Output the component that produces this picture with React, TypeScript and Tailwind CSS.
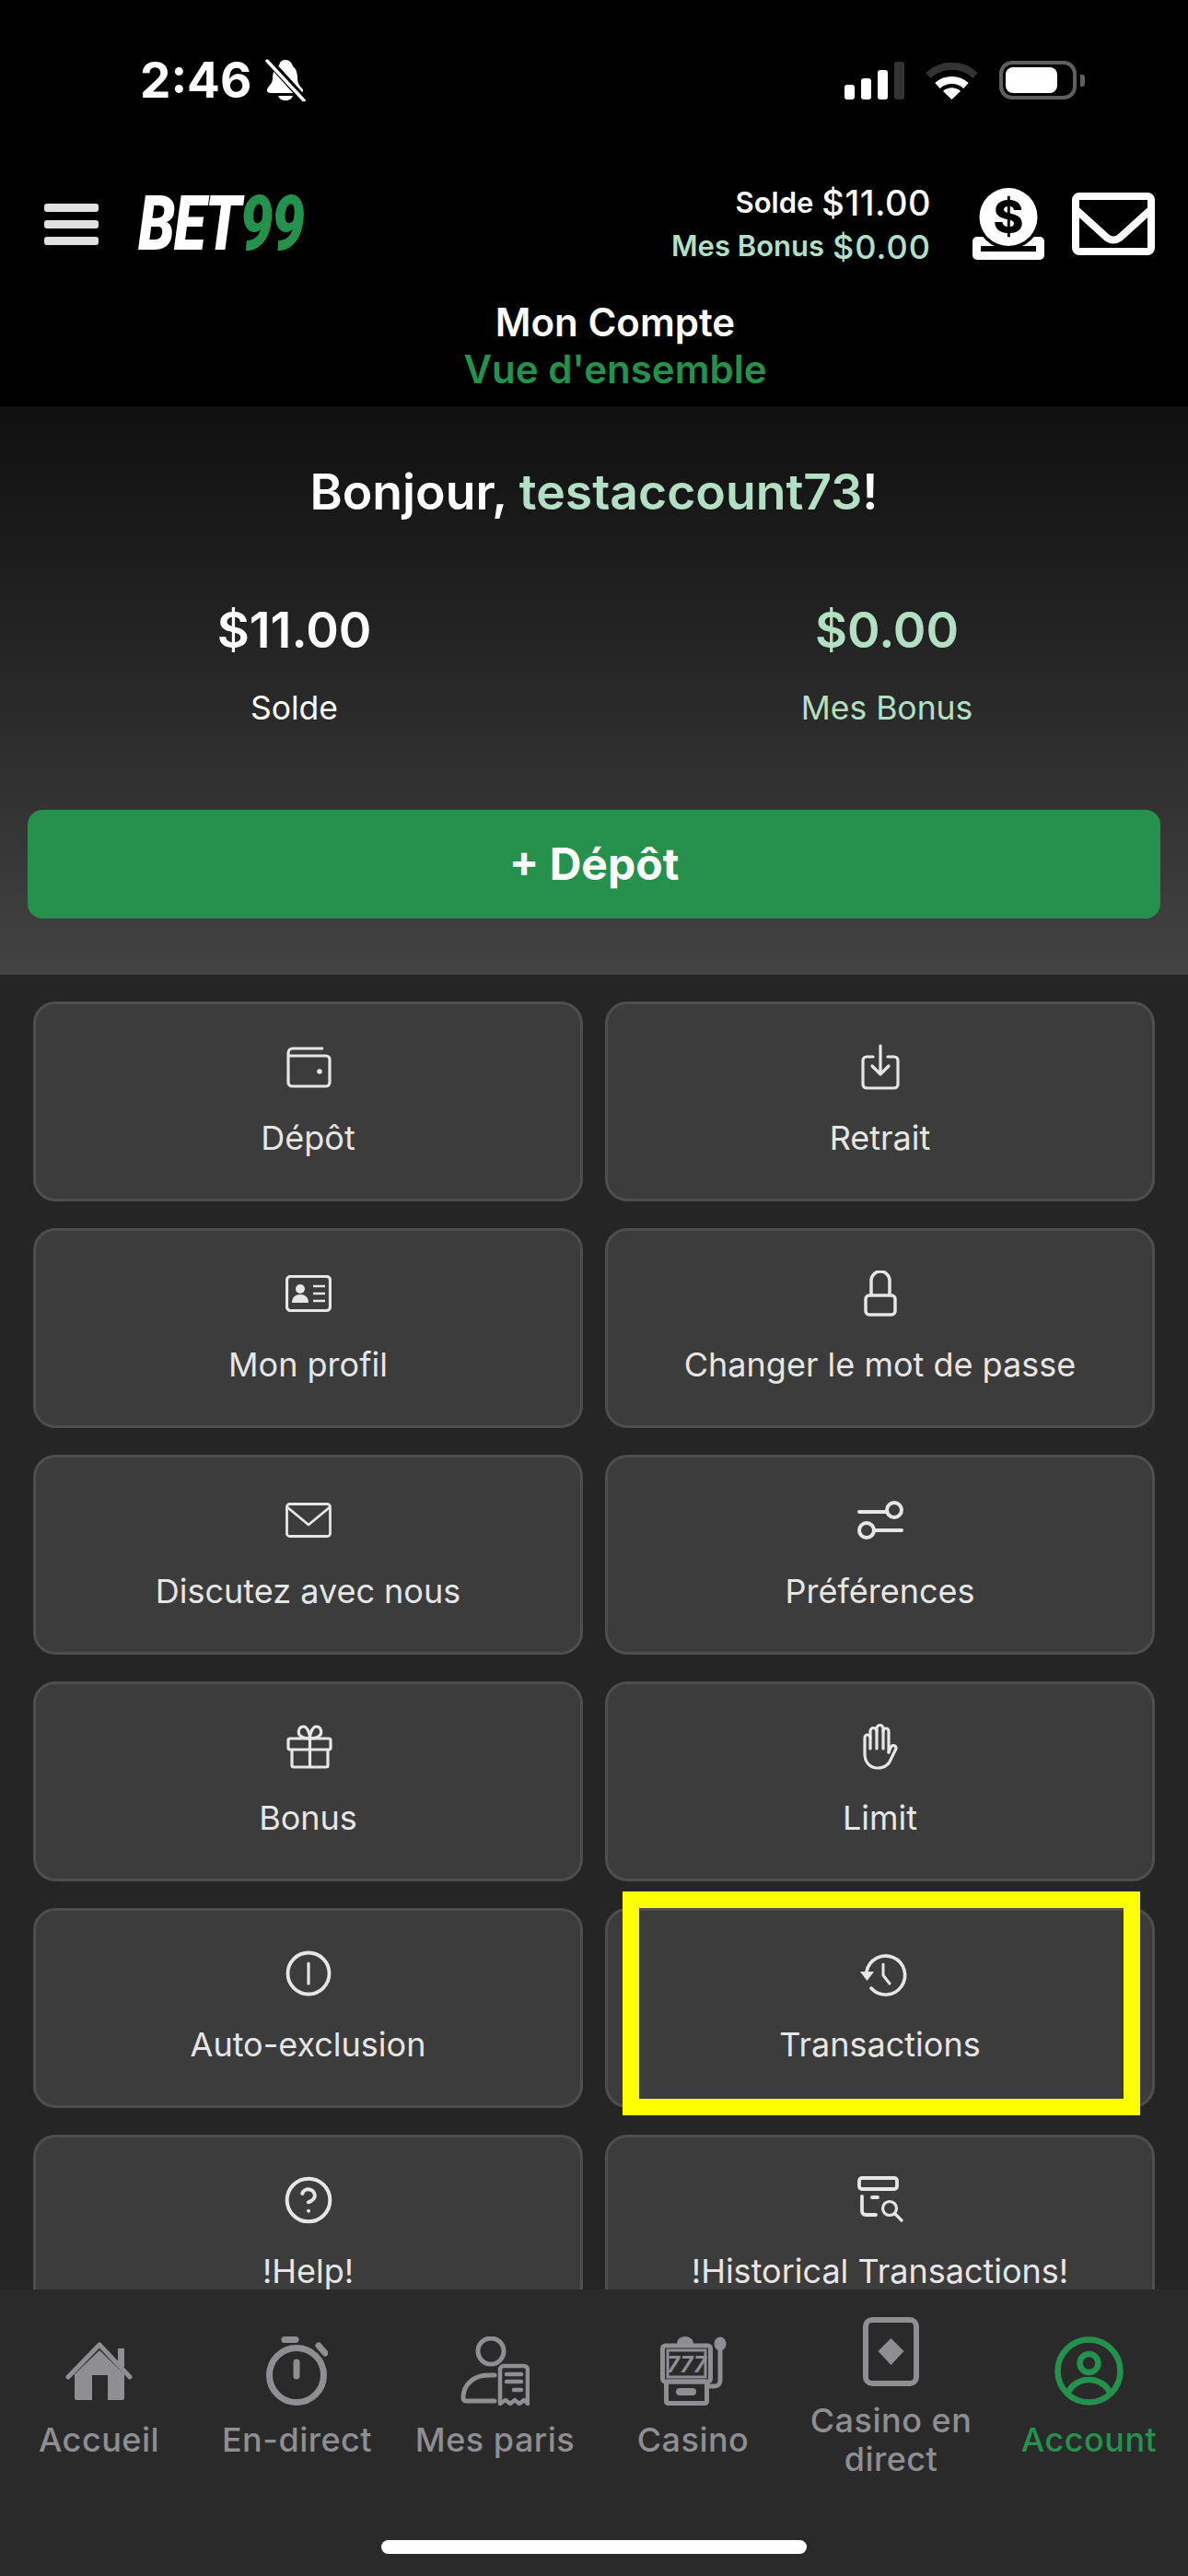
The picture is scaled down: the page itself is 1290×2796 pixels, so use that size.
import React from 'react';
import { CircleHelp } from 'lucide-react';

const font = { fontFamily: 'Inter, "Liberation Sans", sans-serif' };

const WalletIcon = () => (
  <svg width="50" height="46" viewBox="0 0 50 46" fill="none" stroke="currentColor" strokeWidth="3.2">
    <path d="M41 3H8a5 5 0 0 0-5 5v32a4 4 0 0 0 4 4h37a4 4 0 0 0 4-4V15a4 4 0 0 0-4-4H4" />
    <circle cx="37" cy="28" r="2.8" fill="currentColor" stroke="none" />
  </svg>
);

const WithdrawIcon = () => (
  <svg width="42" height="50" viewBox="0 0 42 50" fill="none" stroke="currentColor" strokeWidth="3.2" strokeLinecap="round" strokeLinejoin="round">
    <path d="M13 14H6a4 4 0 0 0-4 4v26a4 4 0 0 0 4 4h30a4 4 0 0 0 4-4V18a4 4 0 0 0-4-4h-7" />
    <path d="M21 2v31M12 24l9 9 9-9" />
  </svg>
);

const ProfileIcon = () => (
  <svg width="50" height="40" viewBox="0 0 50 40" fill="none" stroke="currentColor" strokeWidth="3.2">
    <rect x="1.5" y="1.5" width="47" height="37" rx="4" />
    <circle cx="16" cy="15" r="5" fill="currentColor" stroke="none" />
    <path d="M7 30c0-6 4-9 9-9s9 3 9 9z" fill="currentColor" stroke="none" />
    <path d="M30 12h13M30 20h13M30 28h13" strokeWidth="2.5" />
  </svg>
);

const LockIcon = () => (
  <svg width="36" height="50" viewBox="0 0 36 50" fill="none" stroke="currentColor" strokeWidth="3.5" strokeLinejoin="round">
    <path d="M8 27V11a10 10 0 0 1 20 0v16" />
    <rect x="2" y="27" width="32" height="21" rx="4" />
  </svg>
);

const MailLineIcon = () => (
  <svg width="50" height="38" viewBox="0 0 50 38" fill="none" stroke="currentColor" strokeWidth="2.8" strokeLinejoin="round">
    <rect x="1.5" y="1.5" width="47" height="35" rx="3" />
    <path d="M2 5l23 19L48 5" />
  </svg>
);

const SlidersIcon = () => (
  <svg width="50" height="44" viewBox="0 0 50 44" fill="none" stroke="currentColor" strokeWidth="4" strokeLinecap="round">
    <path d="M2 13h30M18 33h30" />
    <circle cx="40" cy="11" r="8" />
    <circle cx="10" cy="33" r="8" />
  </svg>
);

const GiftIcon = () => (
  <svg width="70" height="70" viewBox="0 1 70 70" fill="none" stroke="currentColor" strokeWidth="3.2" strokeLinejoin="round">
    <rect x="13" y="27" width="46" height="12" rx="2" />
    <path d="M17 39v17a2 2 0 0 0 2 2h35a2 2 0 0 0 2-2V39M36.5 27v31" />
    <path d="M36.5 27c-4 0-10-1-12-5-1-4 1-8 5-8s7 7 7 13c0-6 3-13 7-13s6 4 5 8c-2 4-8 5-12 5z" />
  </svg>
);

const HandIcon = () => (
  <svg width="70" height="70" viewBox="0 1 70 70" fill="none" stroke="currentColor" strokeWidth="3.2" strokeLinecap="round" strokeLinejoin="round">
    <path d="M24 38V26a3 3 0 0 0-6 0v18c0 9 6 15 14 15s13-5 15-11l5-10a3 3 0 0 0-5.5-2L44 42" />
    <path d="M24 26v-7a3.5 3.5 0 0 1 7 0v19" />
    <path d="M31 19v-3a3.5 3.5 0 0 1 7 0v22" />
    <path d="M38 19a3 3 0 0 1 6 0v23" />
  </svg>
);

const InfoLineIcon = () => (
  <svg width="50" height="50" viewBox="0 0 50 50" fill="none" stroke="currentColor" strokeWidth="3.8" strokeLinecap="round">
    <circle cx="25" cy="25" r="22.5" />
    <path d="M25 14v22" strokeWidth="3.2" />
  </svg>
);

const HistoryIcon = () => (
  <svg width="70" height="70" viewBox="0 -3 70 70" fill="none" stroke="currentColor" strokeWidth="3.6" strokeLinecap="round" strokeLinejoin="round">
    <path d="M20 30A21 21 0 1 1 25 48" />
    <path d="M13 30h15l-7.5 10z" fill="currentColor" stroke="none" />
    <path d="M38 22v12l7 9" strokeWidth="3" />
  </svg>
);

const HistoricalIcon = () => (
  <svg width="70" height="70" viewBox="0 -2 70 70" fill="none" stroke="currentColor" strokeWidth="3.8" strokeLinecap="round" strokeLinejoin="round">
    <rect x="12" y="9" width="41" height="12" rx="3" />
    <path d="M15 29v16a4 4 0 0 0 4 4h11M26 30h6" />
    <circle cx="45" cy="42" r="7.5" strokeWidth="3.2" />
    <path d="M51 48l7 7" strokeWidth="3.2" />
  </svg>
);

const DepositIcon = () => (
  <svg width="78" height="78" viewBox="0 0 78 78">
    <rect x="0" y="53" width="78" height="25" rx="5" fill="#fff" />
    <rect x="9" y="63" width="60" height="6" fill="#000" />
    <circle cx="39" cy="31.5" r="35" fill="#000" />
    <circle cx="39" cy="31.5" r="31.5" fill="#fff" />
    <text x="39" y="49" textAnchor="middle" fontSize="50" fontWeight="800" fill="#000" fontFamily="Inter, sans-serif">$</text>
  </svg>
);

const HeaderMailIcon = () => (
  <svg width="90" height="68" viewBox="0 0 90 68" fill="none" stroke="#fff" strokeWidth="8" strokeLinejoin="round" strokeLinecap="round">
    <rect x="4" y="4" width="82" height="60" rx="4" />
    <path d="M6 20l32 29q7 5 14 0l32-29" />
  </svg>
);

const BellOffIcon = () => (
  <svg width="44" height="46" viewBox="0 0 44 46">
    <path d="M22 1c4 0 7 3 8 7 4 3 5 8 5 13 0 5 2 8 5 11 2 2 1 5-2 5H6c-4 0-5-3-3-6 2-3 5-5 5-10 0-7 3-12 7-14 1-4 3-6 7-6z" fill="#fff" />
    <path d="M14 40h16c-1 3-4 5-8 5s-7-2-8-5z" fill="#fff" />
    <path d="M1 -1l42 46" stroke="#000" strokeWidth="8" />
    <path d="M2 2l40 43" stroke="#fff" strokeWidth="3.5" strokeLinecap="round" />
  </svg>
);

const SignalIcon = () => (
  <svg width="65" height="41" viewBox="0 0 65 41">
    <rect x="0" y="25" width="11" height="16" rx="3" fill="#fff" />
    <rect x="18" y="18" width="11" height="23" rx="3" fill="#fff" />
    <rect x="36" y="9" width="11" height="32" rx="3" fill="#fff" />
    <rect x="54" y="0" width="11" height="41" rx="3" fill="#333" />
  </svg>
);

const WifiIcon = () => (
  <svg width="57" height="42" viewBox="0 0 57 42" fill="none">
    <path d="M3 16a37 37 0 0 1 51 0" stroke="#333" strokeWidth="8" />
    <path d="M13 27a23 23 0 0 1 31 0" stroke="#fff" strokeWidth="8" />
    <path d="M28.5 42L19 33a14 14 0 0 1 19 0z" fill="#fff" />
  </svg>
);

const BatteryIcon = () => (
  <div className="flex items-center">
    <div className="w-[84px] h-[42px] rounded-[14px] border-[4px] border-[#5f5f5f] p-[3px]">
      <div className="w-[56px] h-full rounded-[8px] bg-white" />
    </div>
    <div className="ml-[4px] w-[5px] h-[13px] rounded-r-[3px] bg-[#5f5f5f]" />
  </div>
);

const HomeIcon = () => (
  <svg width="73" height="64" viewBox="0 0 73 64">
    <path d="M10 36L37 10l27 26v26a2 2 0 0 1-2 2H12a2 2 0 0 1-2-2z" fill="#8e8e93" />
    <rect x="57" y="8" width="7" height="20" fill="#8e8e93" />
    <path d="M3 39L37 4l33 35" fill="none" stroke="#8e8e93" strokeWidth="5" strokeLinecap="round" strokeLinejoin="round" />
    <rect x="29" y="37" width="17" height="27" fill="#2a2a2a" />
  </svg>
);

const TimerIcon = () => (
  <svg width="67" height="75" viewBox="0 0 67 75" fill="none" stroke="#8e8e93" strokeWidth="7" strokeLinecap="round">
    <path d="M20 3.5h12" strokeWidth="7" />
    <circle cx="33" cy="42" r="29.5" />
    <path d="M33 28v15M57 10l7 8" />
  </svg>
);

const BetsIcon = () => (
  <svg width="75" height="75" viewBox="0 0 75 75" fill="none" stroke="#8e8e93" strokeWidth="5" strokeLinecap="round" strokeLinejoin="round">
    <circle cx="33" cy="16" r="14" />
    <path d="M37 42h-7C14 42 3 53 3 66v1a3 3 0 0 0 3 3h31" />
    <path d="M43 73V36a4 4 0 0 1 4-4h22a4 4 0 0 1 4 4v37l-4-4-5 4-5-4-5 4-5-4z" strokeWidth="4.5" />
    <path d="M50 41h16M50 49h16M58 58h8" strokeWidth="4.5" />
  </svg>
);

const SlotIcon = () => (
  <svg width="72" height="75" viewBox="0 0 72 75" fill="none" stroke="#8e8e93" strokeWidth="5">
    <path d="M18 8a9 8 0 0 1 18 0z" fill="#8e8e93" stroke="none" />
    <rect x="2.5" y="10" width="52" height="39" rx="3" />
    <rect x="8" y="15" width="41" height="29" strokeWidth="3" />
    <text x="28.5" y="39" textAnchor="middle" fontSize="24" fontWeight="700" fontStyle="italic" fill="#8e8e93" stroke="none" fontFamily="Inter, sans-serif">777</text>
    <rect x="6.5" y="49" width="44" height="23.5" rx="2" />
    <rect x="17" y="56" width="22" height="8" rx="4" fill="#8e8e93" stroke="none" />
    <ellipse cx="65" cy="8" rx="6.5" ry="7.5" fill="#8e8e93" stroke="none" />
    <path d="M65 12v36a6 6 0 0 1-6 6h-8" />
  </svg>
);

const CardIcon = () => (
  <svg width="61" height="75" viewBox="0 0 61 75" fill="none">
    <rect x="3" y="3" width="55" height="69" rx="7" stroke="#8e8e93" strokeWidth="6" />
    <path d="M30.5 23l14 14-14 15-14-15z" fill="#8e8e93" />
  </svg>
);

const AccountIcon = () => (
  <svg width="75" height="75" viewBox="0 0 75 75" fill="none" stroke="#23924c" strokeWidth="6.5">
    <circle cx="37.5" cy="37.5" r="34" />
    <circle cx="37.5" cy="29" r="10" />
    <path d="M14 63c4-11 14-16 23.5-16S57 52 61 63" />
  </svg>
);

const menuItems = [
  { label: 'Dépôt', icon: <WalletIcon /> },
  { label: 'Retrait', icon: <WithdrawIcon /> },
  { label: 'Mon profil', icon: <ProfileIcon /> },
  { label: 'Changer le mot de passe', icon: <LockIcon /> },
  { label: 'Discutez avec nous', icon: <MailLineIcon /> },
  { label: 'Préférences', icon: <SlidersIcon /> },
  { label: 'Bonus', icon: <GiftIcon /> },
  { label: 'Limit', icon: <HandIcon /> },
  { label: 'Auto-exclusion', icon: <InfoLineIcon /> },
  { label: 'Transactions', icon: <HistoryIcon />, highlighted: true },
  { label: '!Help!', icon: <CircleHelp size={56} strokeWidth={1.7} /> },
  { label: '!Historical Transactions!', icon: <HistoricalIcon /> },
];

const navItems = [
  { label: 'Accueil', icon: <HomeIcon /> },
  { label: 'En-direct', icon: <TimerIcon /> },
  { label: 'Mes paris', icon: <BetsIcon /> },
  { label: 'Casino', icon: <SlotIcon /> },
  { label: 'Casino en direct', icon: <CardIcon /> },
  { label: 'Account', icon: <AccountIcon />, active: true },
];

export default function App() {
  return (
    <div className="w-[1290px] h-[2796px] flex flex-col overflow-hidden bg-[#252525]" style={font}>
      {/* Header */}
      <header className="h-[441px] shrink-0 bg-black text-white">
        <div className="h-[200px] pt-[58px] pl-[152px] pr-[112px] flex items-start justify-between">
          <div className="flex items-center h-[58px]">
            <span className="text-[53px] leading-[58px] font-bold">2:46</span>
            <span className="ml-[15px]"><BellOffIcon /></span>
          </div>
          <div className="flex items-center gap-[23px] h-[58px]">
            <SignalIcon />
            <WifiIcon />
            <BatteryIcon />
          </div>
        </div>

        <div className="h-[86px] pl-[48px] pr-[36px] flex items-center">
          <div className="w-[59px] flex flex-col gap-[9px]">
            <div className="h-[9px] rounded-[3px] bg-[#e0e0e0]" />
            <div className="h-[9px] rounded-[3px] bg-[#e0e0e0]" />
            <div className="h-[9px] rounded-[3px] bg-[#e0e0e0]" />
          </div>
          <div className="ml-[43px] w-[182px] h-[60px] flex items-center">
            <div className="origin-left scale-x-[0.765] whitespace-nowrap text-[84px] leading-[60px] font-black italic tracking-[-2px]" style={{ fontFamily: 'Roboto, sans-serif' }}>
              BET<span className="text-[#23924c]">99</span>
            </div>
          </div>
          <div className="ml-auto mr-[45px] pt-[2px] flex flex-col items-end">
            <div className="h-[47px] flex items-center font-semibold text-[31px]">
              Solde<span className="ml-[9px] text-[38px] font-medium tracking-[0.5px]">$11.00</span>
            </div>
            <div className="h-[47px] flex items-center font-semibold text-[31px] text-[#b3e0c4]">
              Mes Bonus<span className="ml-[9px] text-[36px] font-medium tracking-[1px]">$0.00</span>
            </div>
          </div>
          <DepositIcon />
          <span className="ml-[30px]"><HeaderMailIcon /></span>
        </div>

        <div className="pt-[38px] pl-[46px] text-center text-[42px] leading-[51px] font-semibold">
          <div>Mon Compte</div>
          <div className="text-[#23924c]">Vue d'ensemble</div>
        </div>
      </header>

      {/* Balance */}
      <section className="h-[617px] shrink-0 pt-[63px] bg-gradient-to-b from-[#101010] to-[#434343] text-white">
        <h1 className="text-center text-[53.5px] leading-[60px] font-semibold">
          Bonjour, <span className="text-[#b3e0c4]">testaccount73</span>!
        </h1>
        <div className="mt-[90px] pr-[6px] grid grid-cols-2 text-center">
          <div className="-ml-[3px]">
            <div className="text-[54px] leading-[60px] font-semibold">$11.00</div>
            <div className="mt-[33px] text-[35.5px] leading-[44px]">Solde</div>
          </div>
          <div className="text-[#b3e0c4]">
            <div className="text-[54px] leading-[60px] font-semibold">$0.00</div>
            <div className="mt-[33px] text-[35.5px] leading-[44px]">Mes Bonus</div>
          </div>
        </div>
        <button className="mt-[88px] mx-[30px] w-[1230px] h-[118px] rounded-[16px] bg-[#25914c] text-[48px] font-bold">
          + Dépôt
        </button>
      </section>

      {/* Menu */}
      <main className="flex-1 min-h-0 overflow-hidden px-[36px] pt-[29px]">
        <div className="grid grid-cols-2 gap-x-[24px] gap-y-[29px]">
          {menuItems.map((item) => (
            <div
              key={item.label}
              className="relative h-[217px] rounded-[24px] border-[3px] border-[#4e4e50] bg-[#3c3c3c] text-[#e6e6e6] flex flex-col items-center pt-[43px]"
            >
              <div className="h-[50px] flex items-center justify-center">{item.icon}</div>
              <div className="mt-[30px] text-[36px] leading-[44px]">{item.label}</div>
              {item.highlighted && (
                <div className="absolute left-[16px] top-[-21px] w-[562px] h-[243px] border-[18px] border-[#ffff00]" />
              )}
            </div>
          ))}
        </div>
      </main>

      {/* Bottom nav */}
      <nav className="h-[311px] shrink-0 bg-[#2a2a2a]">
        <div className="h-[234px] grid grid-cols-6 items-center">
          {navItems.map((item) => (
            <div key={item.label} className="flex flex-col items-center text-center">
              <div className="h-[75px] flex items-center justify-center">{item.icon}</div>
              <div className={`mt-[16px] w-[190px] text-[36px] leading-[42px] font-medium tracking-[0.5px] ${item.active ? 'text-[#23924c]' : 'text-[#8e8e93]'}`}>
                {item.label}
              </div>
            </div>
          ))}
        </div>
        <div className="pt-[38px] flex justify-center">
          <div className="w-[462px] h-[15px] rounded-full bg-white" />
        </div>
      </nav>
    </div>
  );
}
